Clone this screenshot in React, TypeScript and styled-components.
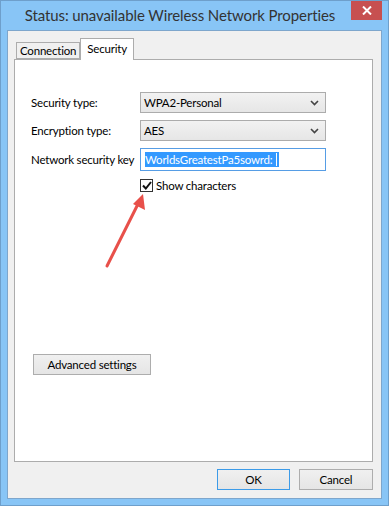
import styled, { createGlobalStyle } from 'styled-components';

const GlobalStyle = createGlobalStyle`
  html, body {
    margin: 0;
    padding: 0;
    background: #ffffff;
  }
  body {
    font-family: 'Segoe UI', Lato, 'Noto Sans', sans-serif;
  }
`;

const Window = styled.div`
  position: relative;
  width: 389px;
  height: 506px;
  box-sizing: border-box;
  border: 1px solid #6e9fcb;
  background: #88c5f6;
  display: flex;
  flex-direction: column;
`;

const TitleBar = styled.div`
  height: 29px;
  display: flex;
  align-items: flex-start;
  padding-right: 6px;
`;

const Title = styled.div`
  flex: 1;
  text-align: center;
  padding-top: 5px;
  padding-left: 8px;
  font-size: 15px;
  letter-spacing: -0.1px;
  color: #333333;
  white-space: nowrap;
`;

const CloseButton = styled.div`
  width: 31px;
  height: 19px;
  background: #c75050;
  display: flex;
  align-items: center;
  justify-content: center;
`;

const Client = styled.div`
  flex: 1;
  margin: 0 6px 6px 6px;
  border: 1px solid #7ea6cc;
  background: #f0f0f0;
  display: flex;
  flex-direction: column;
  padding: 7px 8px 0 6px;
  font-size: 11.5px;
  letter-spacing: -0.2px;
  color: #000;
`;

const TabRow = styled.div`
  display: flex;
  align-items: flex-end;
  padding-left: 2px;
  height: 21px;
  position: relative;
  z-index: 1;
`;

const Tab = styled.div<{ $active?: boolean }>`
  box-sizing: border-box;
  height: ${(p) => (p.$active ? '22px' : '17px')};
  margin-bottom: ${(p) => (p.$active ? '-1px' : '0')};
  padding: 0 ${(p) => (p.$active ? '6px' : '3px')};
  border: 1px solid #acacac;
  border-bottom: ${(p) => (p.$active ? 'none' : '1px solid #acacac')};
  background: ${(p) => (p.$active ? '#ffffff' : '#f0f0f0')};
  display: flex;
  align-items: center;
  padding-bottom: ${(p) => (p.$active ? '3px' : '0')};
`;

const Panel = styled.div`
  height: 403px;
  box-sizing: border-box;
  border: 1px solid #acacac;
  background: #ffffff;
  padding: 32px 0 0 16px;
  display: flex;
  flex-direction: column;
`;

const FormGrid = styled.div`
  display: grid;
  grid-template-columns: 109px 186px;
  row-gap: 7px;
  align-items: center;
`;

const Label = styled.div`
  white-space: nowrap;
`;

const Select = styled.div`
  box-sizing: border-box;
  height: 21px;
  border: 1px solid #acacac;
  background: linear-gradient(#f2f2f2, #e6e6e6);
  display: flex;
  align-items: center;
  justify-content: space-between;
  padding: 0 6px 0 3px;
`;

const KeyInput = styled.div`
  box-sizing: border-box;
  height: 23px;
  border: 1px solid #569de5;
  background: #fff;
  display: flex;
  align-items: center;
  padding-left: 4px;
`;

const Selected = styled.span`
  background: #3399ff;
  color: #fff;
  line-height: 15px;
  display: inline-flex;
  align-items: center;
`;

const Caret = styled.span`
  display: inline-block;
  width: 1px;
  height: 13px;
  background: #fff;
  margin: 0 2px 0 4px;
`;

const CheckRow = styled.label`
  grid-column: 2;
  display: flex;
  align-items: center;
  gap: 3px;
  margin-top: 1px;
`;

const CheckBox = styled.span`
  box-sizing: border-box;
  width: 13px;
  height: 13px;
  border: 1px solid #333;
  background: #fff;
  display: flex;
  align-items: center;
  justify-content: center;
`;

const Button = styled.div<{ $default?: boolean; $width: number }>`
  box-sizing: border-box;
  width: ${(p) => p.$width}px;
  height: 21px;
  border: 1px solid ${(p) => (p.$default ? '#3c9be8' : '#adadad')};
  background: linear-gradient(#f0f0f0, #e5e5e5);
  display: flex;
  align-items: center;
  justify-content: center;
`;

const AdvancedWrap = styled.div`
  margin-top: 162px;
  margin-left: 2px;
`;

const Footer = styled.div`
  display: flex;
  justify-content: flex-end;
  gap: 9px;
  padding: 7px 0 0 0;
`;

const Annotation = styled.svg`
  position: absolute;
  left: 0;
  top: 0;
  pointer-events: none;
`;

function Chevron() {
  return (
    <svg width="9" height="6" viewBox="0 0 9 6">
      <path d="M1 1 L4.5 4.5 L8 1" fill="none" stroke="#444" strokeWidth="1.6" />
    </svg>
  );
}

export default function App() {
  return (
    <>
      <GlobalStyle />
      <Window>
        <TitleBar>
          <Title>Status: unavailable Wireless Network Properties</Title>
          <CloseButton>
            <svg width="10" height="9" viewBox="0 0 10 9">
              <path d="M1 0.5 L9 8.5 M9 0.5 L1 8.5" stroke="#fff" strokeWidth="2" />
            </svg>
          </CloseButton>
        </TitleBar>
        <Client>
          <TabRow>
            <Tab>Connection</Tab>
            <Tab $active>Security</Tab>
          </TabRow>
          <Panel>
            <FormGrid>
              <Label>Security type:</Label>
              <Select>
                <span>WPA2-Personal</span>
                <Chevron />
              </Select>
              <Label>Encryption type:</Label>
              <Select>
                <span>AES</span>
                <Chevron />
              </Select>
              <Label>Network security key</Label>
              <KeyInput>
                <Selected>
                  WorldsGreatestPa5sowrd:
                  <Caret />
                </Selected>
              </KeyInput>
              <CheckRow>
                <CheckBox>
                  <svg width="10" height="9" viewBox="0 0 10 9">
                    <path d="M1 4.5 L3.8 7.5 L9 1" fill="none" stroke="#111" strokeWidth="2" />
                  </svg>
                </CheckBox>
                <span>Show characters</span>
              </CheckRow>
            </FormGrid>
            <AdvancedWrap>
              <Button $width={118}>Advanced settings</Button>
            </AdvancedWrap>
          </Panel>
          <Footer>
            <Button $default $width={73}>
              OK
            </Button>
            <Button $width={74}>Cancel</Button>
          </Footer>
        </Client>
        <Annotation width="389" height="506" viewBox="0 0 389 506">
          <line x1="106" y1="265" x2="137" y2="203" stroke="#e8504a" strokeWidth="3" strokeLinecap="round" />
          <polygon points="142,193 144,209 132,203" fill="#e8504a" />
        </Annotation>
      </Window>
    </>
  );
}
